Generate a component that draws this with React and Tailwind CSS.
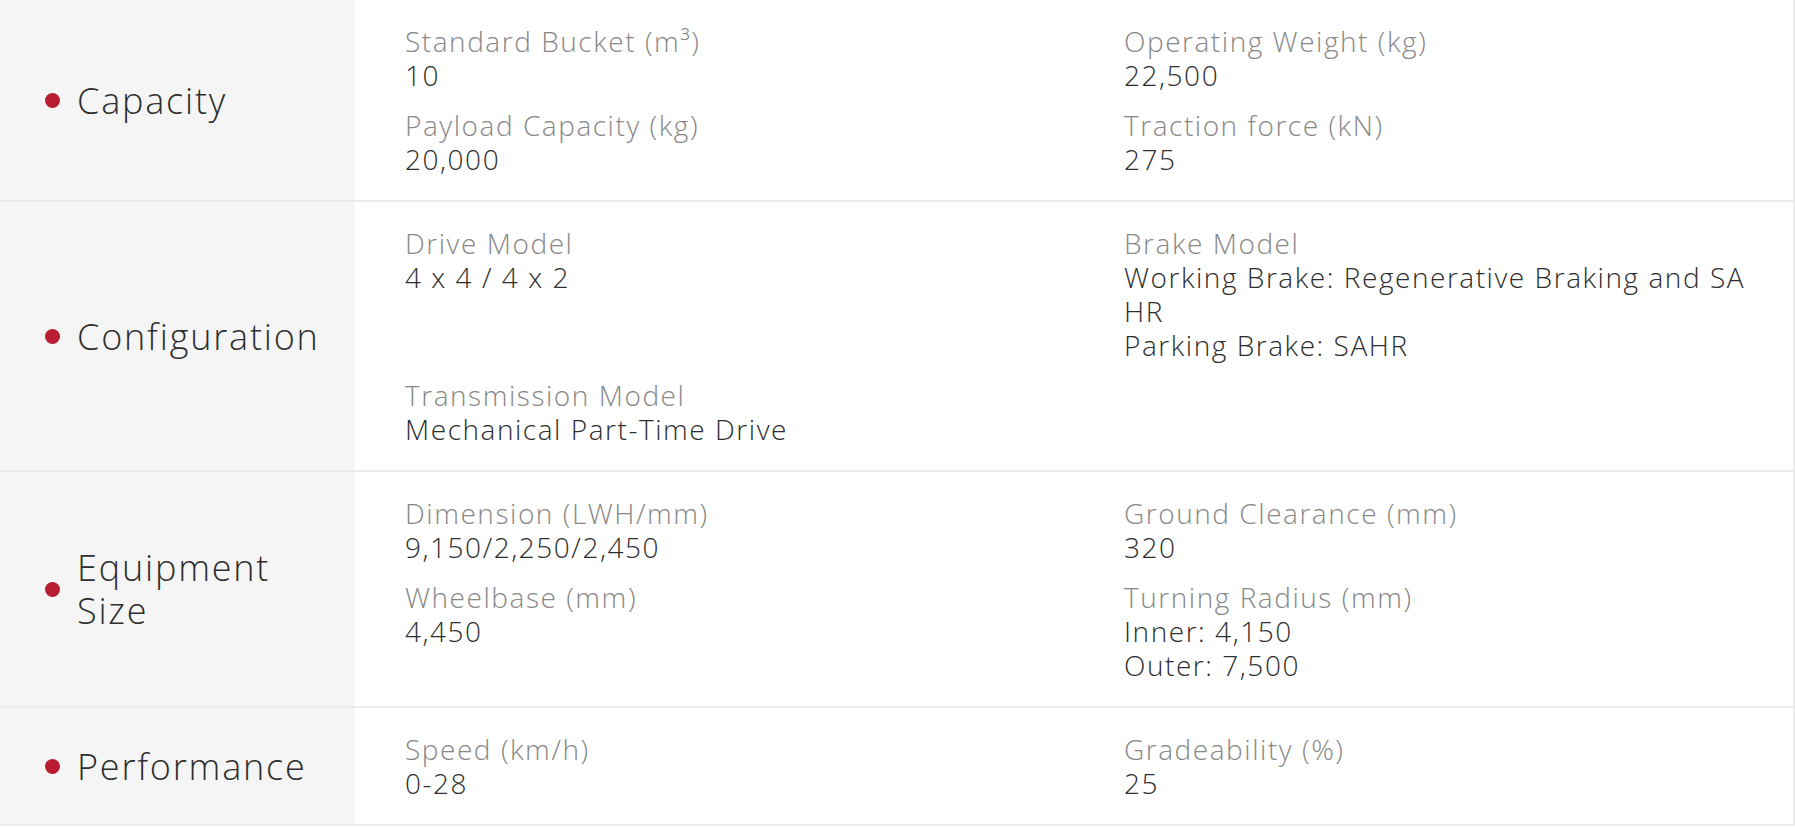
import React from 'react'

const specs = [
  {
    title: 'Capacity',
    items: [
      { label: 'Standard Bucket (m³)', value: ['10'] },
      { label: 'Operating Weight (kg)', value: ['22,500'] },
      { label: 'Payload Capacity (kg)', value: ['20,000'] },
      { label: 'Traction force (kN)', value: ['275'] },
    ],
  },
  {
    title: 'Configuration',
    items: [
      { label: 'Drive Model', value: ['4 x 4 / 4 x 2'] },
      // the source wraps SAHR mid-word
      { label: 'Brake Model', value: ['Working Brake: Regenerative Braking and SA', 'HR', 'Parking Brake: SAHR'] },
      { label: 'Transmission Model', value: ['Mechanical Part-Time Drive'] },
    ],
  },
  {
    title: 'Equipment Size',
    items: [
      { label: 'Dimension (LWH/mm)', value: ['9,150/2,250/2,450'] },
      { label: 'Ground Clearance (mm)', value: ['320'] },
      { label: 'Wheelbase (mm)', value: ['4,450'] },
      { label: 'Turning Radius (mm)', value: ['Inner: 4,150', 'Outer: 7,500'] },
    ],
  },
  {
    title: 'Performance',
    items: [
      { label: 'Speed (km/h)', value: ['0-28'] },
      { label: 'Gradeability (%)', value: ['25'] },
    ],
  },
]

function SpecRow({ row }) {
  return (
    <div className="flex border-b-2 border-[#ebebeb]">
      {/* left title column */}
      <div className="w-[355px] shrink-0 bg-[#f5f5f5] flex items-center pl-[45px] pr-[30px]">
        <span className="w-[15px] h-[15px] rounded-full bg-[#b71c33] shrink-0"></span>
        <span className="ml-[17px] text-[36px] leading-[43px] tracking-[0.05em] font-[350] text-[#2e2e2e]">{row.title}</span>
      </div>

      {/* spec grid */}
      <div className="flex-1 grid grid-cols-2 gap-y-4 py-6 text-[28px] leading-[34px] tracking-[0.055em]">
        {row.items.map((item, i) => (
          <div key={i} className="px-[50px] min-w-0">
            <div className="text-[#888] font-light whitespace-nowrap">{item.label}</div>
            {item.value.map((v, j) => (
              <div key={j} className="text-[#2e2e2e] font-[350] whitespace-nowrap">{v}</div>
            ))}
          </div>
        ))}
      </div>
    </div>
  )
}

export default function App() {
  return (
    <div className="w-[1795px] min-h-[827px] bg-white" style={{ fontFamily: '"Open Sans", Arial, sans-serif' }}>
      <div className="w-[1795px] border-r-2 border-[#ebebeb]">
        {specs.map((row, i) => (
          <SpecRow key={i} row={row} />
        ))}
      </div>
    </div>
  )
}
